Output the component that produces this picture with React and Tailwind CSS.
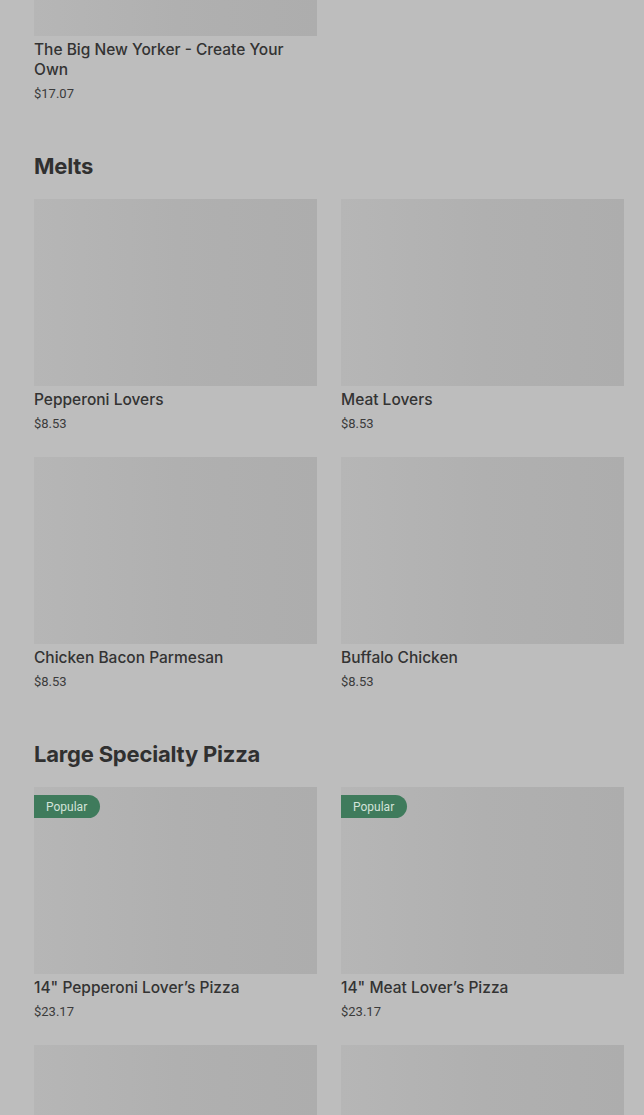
import React from 'react';

const sections = [
  {
    title: 'Melts',
    items: [
      { name: 'Pepperoni Lovers', price: '$8.53' },
      { name: 'Meat Lovers', price: '$8.53' },
      { name: 'Chicken Bacon Parmesan', price: '$8.53' },
      { name: 'Buffalo Chicken', price: '$8.53' },
    ],
  },
  {
    title: 'Large Specialty Pizza',
    items: [
      { name: '14" Pepperoni Lover’s Pizza', price: '$23.17', popular: true },
      { name: '14" Meat Lover’s Pizza', price: '$23.17', popular: true },
      { name: '14" Supreme Pizza', price: '$23.17' },
      { name: '14" Veggie Lover’s Pizza', price: '$23.17' },
    ],
  },
];

const Placeholder = ({ className = '' }) => (
  <div className={`w-full bg-gradient-to-r from-[#b6b6b6] via-[#b0b0b0] to-[#adadad] ${className}`} />
);

const ItemCard = ({ item }) => (
  <div className="flex flex-col">
    <div className="relative">
      <Placeholder className="h-[187px]" />
      {item.popular && (
        <span className="absolute left-0 top-[8px] h-[23px] pl-[12px] pr-[13px] flex items-center rounded-r-full bg-[#3f7b5c] text-[12px] text-[#d3e3da]">
          Popular
        </span>
      )}
    </div>
    <div className="mt-[4px] text-[15.5px] leading-[20px] font-medium text-[#333333]" style={{ fontFamily: 'Inter, "Liberation Sans", sans-serif' }}>
      {item.name}
    </div>
    <div className="mt-[4px] text-[13px] leading-[20px] text-[#3b3b3b]">{item.price}</div>
  </div>
);

const App = () => {
  return (
    <div className="min-h-screen bg-[#bdbdbd] overflow-hidden pl-[34px] pr-[20px]" style={{ fontFamily: 'Roboto, "Liberation Sans", sans-serif' }}>
      {/* previous section, scrolled mostly out of view */}
      <div className="grid grid-cols-2 gap-x-6 -mt-[151px]">
        <ItemCard item={{ name: 'The Big New Yorker - Create Your Own', price: '$17.07' }} />
        <div />
      </div>

      {sections.map((s) => (
        <section key={s.title} className="mt-[48px]">
          <h2 className="text-[22px] leading-[28px] font-bold text-[#303030] tracking-[-0.2px]" style={{ fontFamily: 'Inter, "Liberation Sans", sans-serif' }}>
            {s.title}
          </h2>
          <div className="mt-[19px] grid grid-cols-2 gap-x-6 gap-y-[23px]">
            {s.items.map((it) => (
              <ItemCard key={it.name} item={it} />
            ))}
          </div>
        </section>
      ))}
    </div>
  );
};

export default App;
